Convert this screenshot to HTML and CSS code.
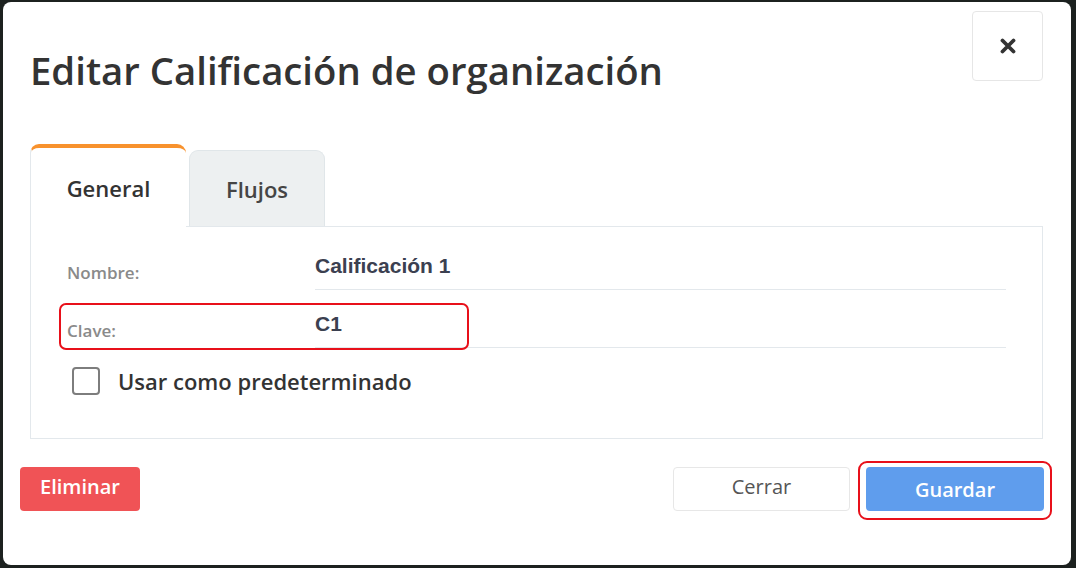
FILE: index.html
```html
<!DOCTYPE html>
<html lang="es">
<head>
<meta charset="utf-8">
<title>Editar Calificación de organización</title>
<link rel="stylesheet" href="styles.css">
</head>
<body>
<div class="dialog">
  <div class="header">
    <h1 class="title">Editar Calificación de organización</h1>
    <button class="close" aria-label="Cerrar">
      <svg width="16" height="16" viewBox="0 0 16 16"><path d="M2.5 2.5 L13.5 13.5 M13.5 2.5 L2.5 13.5" stroke="#333" stroke-width="3.8" stroke-linecap="round" fill="none"/></svg>
    </button>
  </div>
  <div class="tabs-wrap">
    <div class="tabs">
      <div class="tab active">General</div>
      <div class="tab">Flujos</div>
    </div>
    <div class="panel">
      <div class="row">
        <div class="label">Nombre:</div>
        <div class="value">Calificación 1</div>
      </div>
      <div class="row highlighted">
        <div class="label">Clave:</div>
        <div class="value">C1</div>
      </div>
      <label class="check-row">
        <span class="checkbox"></span>
        <span class="check-label">Usar como predeterminado</span>
      </label>
    </div>
  </div>
  <div class="footer">
    <button class="btn btn-danger">Eliminar</button>
    <div class="right-actions">
      <button class="btn btn-default">Cerrar</button>
      <button class="btn btn-primary marked">Guardar</button>
    </div>
  </div>
</div>
</body>
</html>
```

FILE: styles.css
```css
* { box-sizing: border-box; }
html, body { margin: 0; padding: 0; }
body {
  background: #1c211f;
  width: 1076px;
  height: 568px;
  overflow: hidden;
  padding: 2px 5px 3px 3px;
  font-family: "Open Sans", "Liberation Sans", sans-serif;
}
.dialog {
  position: relative;
  background: #fff;
  border-radius: 8px;
  height: 563px;
  display: flex;
  flex-direction: column;
}
.header {
  display: flex;
  justify-content: space-between;
  align-items: flex-start;
  padding: 9px 28px 0 27px;
  height: 143px;
}
.title {
  margin: 36px 0 0 0;
  font-size: 38.3px;
  line-height: 46px;
  font-weight: 600;
  color: #333;
  letter-spacing: 0;
}
.close {
  width: 71px;
  height: 70px;
  border: 1px solid #e6e6e6;
  border-radius: 4px;
  background: #fff;
  display: flex;
  align-items: center;
  justify-content: center;
  padding: 0;
}
.tabs-wrap {
  padding: 0 28px 0 27px;
}
.tabs {
  display: flex;
  align-items: flex-end;
  gap: 3px;
  border-bottom: 1px solid #e3e8ec;
  height: 82px;
}
.tab {
  display: flex;
  align-items: center;
  justify-content: center;
  font-size: 22px;
  font-weight: 600;
  color: #454545;
  border-radius: 9px 9px 0 0;
}
.tab.active {
  width: 156px;
  height: 83px;
  margin-bottom: -1px;
  background: #fff;
  color: #333;
  border-top: 4px solid #f8922d;
  border-left: 1px solid #e3e8ec;
  padding-bottom: 0;
}
.tab:not(.active) {
  width: 136px;
  height: 76px;
  background: #edf0f1;
  border: 1px solid #e0e6e9;
  border-bottom: none;
  padding-bottom: 0;
}
.panel {
  border: 1px solid #e3e8ec;
  border-top: none;
  height: 212px;
  padding: 5px 36px 0 36px;
}
.row {
  position: relative;
  display: grid;
  grid-template-columns: 248px 1fr;
  height: 58px;
}
.label {
  align-self: end;
  padding-bottom: 7px;
  font-size: 17px;
  line-height: 20px;
  font-weight: 600;
  color: #8a8a8a;
}
.value {
  padding-top: 22px;
  font-family: "Liberation Sans", Arial, sans-serif;
  font-weight: 700;
  font-size: 21px;
  line-height: 24px;
  color: #3b4050;
  border-bottom: 1px solid #e3e8ec;
}
.row.highlighted::after {
  content: "";
  position: absolute;
  left: -8px;
  top: 13px;
  width: 406px;
  height: 43px;
  border: 2px solid #e8101a;
  border-radius: 7px;
}
.check-row {
  display: flex;
  align-items: center;
  gap: 18px;
  margin-top: 19px;
  margin-left: 5px;
}
.checkbox {
  width: 28px;
  height: 28px;
  border: 2px solid #7d7d7d;
  border-radius: 4px;
  background: #fff;
}
.check-label {
  font-size: 22px;
  font-weight: 600;
  color: #333;
  line-height: 28px;
}
.footer {
  display: flex;
  justify-content: space-between;
  align-items: flex-start;
  padding: 28px 27px 0 17px;
}
.right-actions {
  display: flex;
  gap: 16px;
}
.btn {
  height: 44px;
  border-radius: 4px;
  font-family: "Open Sans", "Liberation Sans", sans-serif;
  font-size: 20px;
  font-weight: 600;
  padding: 0 0 3px 0;
  border: 1px solid transparent;
}
.btn-danger {
  width: 120px;
  background: #f05356;
  color: #fff;
  padding-bottom: 5px;
}
.btn-default {
  width: 177px;
  background: #fff;
  border-color: #e7e7e7;
  color: #555;
  font-weight: 400;
  padding-bottom: 5px;
}
.btn-primary {
  width: 178px;
  background: #5f9ded;
  color: #fff;
  padding-bottom: 0;
}
.marked { position: relative; }
.marked::after {
  content: "";
  position: absolute;
  left: -9px;
  top: -7px;
  right: -9px;
  bottom: -10px;
  border: 2px solid #e8101a;
  border-radius: 9px;
}
```
